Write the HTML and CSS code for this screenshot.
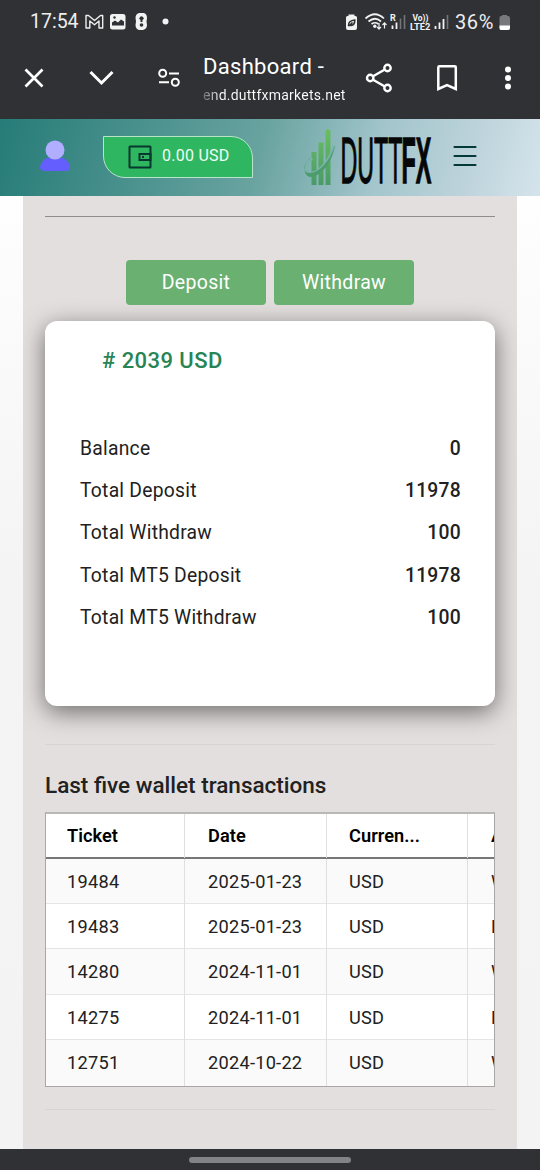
FILE: index.html
```html
<!DOCTYPE html>
<html lang="en">
<head>
<meta charset="utf-8">
<title>Dashboard</title>
<link rel="stylesheet" href="styles.css">
</head>
<body>
<div class="screen">
  <div class="status">
    <span class="clock">17:54</span>
    <svg class="notif" width="88" height="24" viewBox="82 10 88 24" fill="none">
      <path d="M86 28V15.500H88.500L94.500 20.500 100.500 15.500H102.700V28H99V21L94.500 24.800 89.800 21V28Z" stroke="#eee" stroke-width="1.400" stroke-linejoin="round"/>
      <rect x="110" y="14" width="15.500" height="15.500" rx="2.500" fill="#f2f2f2"/>
      <path d="M112 25.500V22.500L115 20.500 118 22.500 121 19.500 124 21.500V25.500Z" fill="#303135"/>
      <circle cx="114.500" cy="17.500" r="1.200" fill="#303135"/>
      <path d="M139 13H144Q147 14 147 18L146.500 21.500 147 25Q147 29 143 30H139Q135.500 29 135.500 25L136 21.500 135.500 18Q135.500 14 139 13Z" fill="#f2f2f2"/>
      <path d="M139 18.500Q141.500 14 144 18.500L142.500 20V22H140.500V20Z" fill="#303135"/><circle cx="141.500" cy="25" r="1.800" fill="#303135"/>
      <circle cx="165.500" cy="21.500" r="3" fill="#f2f2f2"/>
    </svg>
    <svg class="signals" width="108" height="24" viewBox="343 10 108 24" fill="none">
      <path d="M348.500 14.500H354.500V16H355.500Q357 16 357 17.500V28Q357 30 355 30H348Q346 30 346 28V17.500Q346 16 347.500 16H348.500Z" fill="#f2f2f2"/>
      <path d="M348.500 26Q348 20.500 354.800 20Q355 26 349.500 25.500L352.500 22.500" stroke="#303135" stroke-width="1.600"/>
      <path d="M365.500 18.500Q375 10 384 18.500M368.500 21.500Q375 16 381 21.500M371.500 24Q375 21.500 378.500 24" stroke="#f2f2f2" stroke-width="1.700"/>
      <circle cx="374.800" cy="26.300" r="1.700" fill="#f2f2f2"/>
      <path d="M379 23V28.500M377 26.800L379 29 381 26.800M384.500 28.500V23M382.500 25L384.500 22.800 386.500 25" stroke="#f2f2f2" stroke-width="1.200"/>
      <text class="tiny" x="390" y="20.500" font-size="9">R</text>
      <path d="M392.500 25.500V29M396.500 22.500V29" stroke="#f2f2f2" stroke-width="1.800"/>
      <path d="M400.500 18.500V29M404.500 15V29" stroke="#747578" stroke-width="1.600"/>
      <text class="tiny" x="412.500" y="20.800" font-size="8.500" textLength="16" lengthAdjust="spacingAndGlyphs">Vo))</text>
      <text class="tiny" x="410" y="30" font-size="9.500" textLength="20.500" lengthAdjust="spacingAndGlyphs">LTE2</text>
      <path d="M435.500 26V29M439.500 22.500V29M443.500 19V29" stroke="#f2f2f2" stroke-width="1.800"/>
      <path d="M447.500 15V29" stroke="#747578" stroke-width="1.600"/>
    </svg>
    <span class="percent">36%</span>
    <svg class="battery" width="12" height="18" viewBox="0 0 12 18"><path d="M3 2V1H8V2H9Q11 2 11 4V14Q11 16 9 16H2Q.5 16 .5 14V4Q.5 2 2 2Z" fill="#77787b"/><path d="M.5 11.500H11V14Q11 16 9 16H2Q.5 16 .5 14Z" fill="#fff"/></svg>
  </div>

  <div class="toolbar">
    <svg class="tools-left" width="203" height="50" viewBox="0 53 203 50" fill="none" stroke="#fff">
      <path d="M25.500 69.500L42.500 86.500M42.500 69.500L25.500 86.500" stroke-width="2.700"/>
      <path d="M90.500 72L101.500 83 112.500 72" stroke-width="3"/>
      <g stroke-width="2"><circle cx="162.700" cy="73.300" r="3.500"/><path d="M169 73.500H179M159 82.300H169"/><circle cx="175.300" cy="82.300" r="3.500"/></g>
    </svg>
    <div class="site">
      <div class="site-title">Dashboard -</div>
      <div class="site-url">end.duttfxmarkets.net</div>
    </div>
    <svg class="tools-right" width="180" height="50" viewBox="360 53 180 50" fill="none" stroke="#fff">
      <path d="M387.500 68L370 78 387.500 88" stroke-width="2.400"/>
      <g fill="#303135" stroke-width="2.400"><circle cx="387.500" cy="68" r="3.200"/><circle cx="370.200" cy="78" r="3.200"/><circle cx="387.500" cy="88" r="3.200"/></g>
      <path d="M438.300 67.500Q438.300 66.300 439.500 66.300H454.500Q455.800 66.300 455.800 67.500V89L447 85 438.300 89Z" stroke-width="2.500"/>
      <g fill="#fff" stroke="none"><circle cx="508" cy="69.500" r="3"/><circle cx="508" cy="78" r="3"/><circle cx="508" cy="86.500" r="3"/></g>
    </svg>
  </div>

  <header class="site-header">
    <svg class="avatar" width="30" height="32" viewBox="0 0 30 32"><path d="M7 18H23Q29 21 30 27Q30 31 25 31H5Q0 31 0 27Q1 21 7 18Z" fill="#655eff"/><circle cx="15" cy="10" r="9.500" fill="#b1adff"/></svg>
    <div class="wallet">
      <svg width="24" height="24" viewBox="0 0 24 24" fill="none" stroke="#07372e" stroke-width="2"><rect x="1.500" y="1.500" width="21" height="21" rx=".5"/><rect x="11.500" y="9" width="11" height="6"/><path d="M14 12H16"/></svg>
      <span>0.00 USD</span>
    </div>
    <svg class="logo" width="132" height="70" viewBox="303 122 132 70">
      <defs><linearGradient id="leaf" x1="0" y1="0" x2="0" y2="1"><stop offset="0" stop-color="#6abf60"/><stop offset="1" stop-color="#4a9a68"/></linearGradient></defs>
      <path d="M311.500 185V152H316.500V185ZM318.500 185V142.500H323.500V185ZM325.500 185V131Q328 127 330.500 131V185Z" fill="url(#leaf)"/>
      <path d="M312 158C304 165 305 173 311 173C320 173 330 159 334.500 146" fill="none" stroke="#79b3ac" stroke-width="3"/>
      <path d="M313 156C302 163 302 173 310 173C320 173 331 159 335 145C332 164 320 177 310 177C302 175 303 161 313 156Z" fill="#4d9d6c"/>
      <text class="wordmark" transform="translate(340.500 182.500) scale(.34 1)" font-size="65" textLength="182" lengthAdjust="spacingAndGlyphs">DUTT</text>
      <text class="wordmark heavy" transform="translate(401.500 182.500) scale(.34 1)" font-size="65" textLength="88" lengthAdjust="spacingAndGlyphs">FX</text>
    </svg>
    <svg class="menu" width="24" height="22" viewBox="0 0 24 22" stroke="#05383a" stroke-width="2.200" stroke-linecap="round"><path d="M1.500 2H22.500M1.500 11H22.500M1.500 20H22.500"/></svg>
  </header>

  <main class="page">
    <div class="panel">
      <div class="rule dark"></div>
      <div class="actions"><button>Deposit</button><button>Withdraw</button></div>
      <section class="card">
        <h2># 2039 USD</h2>
        <dl>
          <div><dt>Balance</dt><dd>0</dd></div>
          <div><dt>Total Deposit</dt><dd>11978</dd></div>
          <div><dt>Total Withdraw</dt><dd>100</dd></div>
          <div><dt>Total MT5 Deposit</dt><dd>11978</dd></div>
          <div><dt>Total MT5 Withdraw</dt><dd>100</dd></div>
        </dl>
      </section>
      <div class="rule middle"></div>
      <h3>Last five wallet transactions</h3>
      <div class="grid">
        <div class="row head"><span>Ticket</span><span>Date</span><span>Curren...</span><span>A</span></div>
        <div class="row"><span>19484</span><span>2025-01-23</span><span>USD</span><span>W</span></div>
        <div class="row"><span>19483</span><span>2025-01-23</span><span>USD</span><span>D</span></div>
        <div class="row"><span>14280</span><span>2024-11-01</span><span>USD</span><span>W</span></div>
        <div class="row"><span>14275</span><span>2024-11-01</span><span>USD</span><span>D</span></div>
        <div class="row"><span>12751</span><span>2024-10-22</span><span>USD</span><span>W</span></div>
      </div>
      <div class="rule last"></div>
    </div>
  </main>
  <div class="navbar"><div class="handle"></div></div>
</div>
</body>
</html>
```
FILE: styles.css
```css
* { box-sizing: border-box; }
body { margin: 0; font-family: Roboto, "Liberation Sans", sans-serif; color: #212121; }
h2, h3, dl, dd { margin: 0; }
svg { display: block; flex: none; }
.screen { width: 540px; height: 1170px; overflow: hidden; display: flex; flex-direction: column; }
.status { height: 53px; flex: none; background: #303135; color: #eee; display: flex; align-items: flex-start; padding: 10px 0 0 30px; white-space: nowrap; }
.clock { width: 52px; font-size: 19.500px; line-height: 24px; }
.signals { margin-left: 173px; }
.percent { width: 44px; margin-left: 4px; font-size: 20px; line-height: 24px; letter-spacing: .6px; }
.battery { margin: 4px 0 0 0; }
.tiny { fill: #f2f2f2; font-family: Roboto, sans-serif; font-weight: 700; }
.toolbar { height: 66px; flex: none; background: #303135; color: #fff; display: flex; }
.site { width: 157px; white-space: nowrap; }
.site-title { font-size: 22px; line-height: 27px; letter-spacing: .3px; }
.site-url { font-size: 14px; line-height: 20px; margin-top: 5px; letter-spacing: .24px; background: linear-gradient(90deg, #66676a, #fff 18px); -webkit-background-clip: text; background-clip: text; color: transparent; }
.site-header { height: 77px; flex: none; display: flex; align-items: flex-start; background: linear-gradient(105deg, #267c78 0%, #69a3a0 48%, #a2c5cb 69%, #bdd3db 86%, #d5e4ec 100%); }
.avatar { margin: 21px 0 0 40px; }
.wallet { width: 150px; height: 42px; margin: 17px 0 0 33px; border: 1px solid #b9e3cb; border-radius: 0 22px 0 22px; background: #2fb661; color: #effff4; display: flex; align-items: center; gap: 10px; padding-left: 24px; font-size: 16px; letter-spacing: .25px; }
.wallet span { line-height: 20px; margin-bottom: 2px; }
.logo { margin: 3px 0 0 50px; overflow: visible; }
.wordmark { font-family: "Liberation Sans", sans-serif; fill: #050708; stroke: #050708; stroke-width: 1.300px; }
.heavy { font-weight: 700; }
.menu { margin: 26px 0 0 18px; }
.page { height: 953px; flex: none; padding: 0 23px; background: linear-gradient(#fefefe, #f4f4f4 40%, #f3f3f3); }
.panel { height: 953px; padding: 20px 22px 0; background: #e3dfde; overflow: hidden; }
.rule { height: 1px; background: #d8d4d3; }
.rule.dark { background: #8f8c8b; }
.actions { display: flex; justify-content: center; gap: 8px; margin-top: 43px; }
.actions button { width: 140px; height: 45px; border: 0; border-radius: 4px; padding: 0; background: #69b071; color: #fff; font: 400 19.500px Roboto, sans-serif; letter-spacing: .3px; }
.card { height: 385px; margin-top: 16px; padding: 26px 34px 0 35px; background: #fff; border-radius: 12px; box-shadow: 0 6px 24px rgba(0,0,0,.52); }
.card h2 { margin-left: 22px; font-size: 22px; line-height: 27px; font-weight: 500; letter-spacing: .45px; color: #278454; }
.card dl { margin-top: 53px; }
.card dl div { height: 42.300px; display: flex; justify-content: space-between; align-items: center; font-size: 19.300px; letter-spacing: .25px; }
.card dd { font-weight: 500; }
.rule.middle { margin-top: 38px; }
h3 { margin-top: 26px; font-size: 22.500px; line-height: 28px; font-weight: 500; white-space: nowrap; }
.grid { width: 450px; height: 275px; margin-top: 13px; overflow: hidden; background: #fff; border: 1px solid #a9a6a6; border-top-width: 2px; border-top-color: #bbb7b7; }
.row { width: 566px; height: 45.200px; display: grid; grid-template-columns: 139px 142px 141px 144px; border-bottom: 1px solid #e5e5e5; background: #fff; font-size: 18.200px; line-height: 45px; letter-spacing: .25px; }
.row:nth-child(even) { background: #fafafa; }
.row span { padding-left: 22px; border-right: 1px solid #dfdfdf; }
.row span:first-child { padding-left: 21px; }
.row span:nth-child(2) { padding-left: 23px; }
.row span:nth-child(4) { padding-left: 23px; }
.row.head { height: 45px; line-height: 44px; border-bottom: 2px solid #777; font-weight: 600; color: #000; letter-spacing: .05px; }
.row:last-child { border-bottom: 0; height: 48px; }
.rule.last { margin-top: 22px; }
.navbar { height: 21px; flex: none; background: #303135; padding-top: 8px; }
.handle { width: 162px; height: 6px; border-radius: 3px; margin: 0 auto; background: #828387; }
```
